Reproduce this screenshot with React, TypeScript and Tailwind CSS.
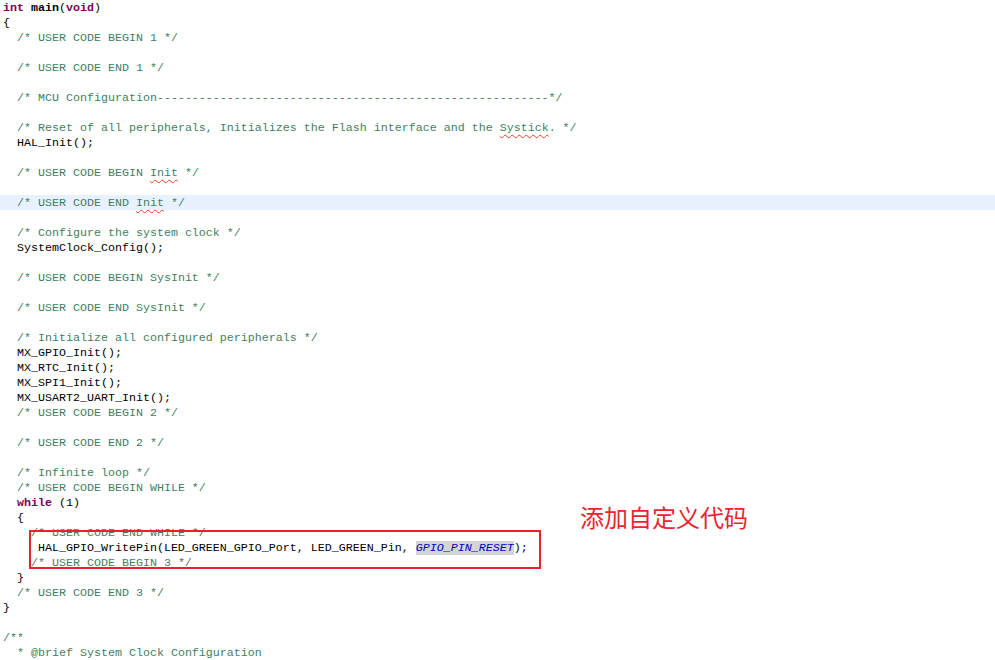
import React from 'react';

type Seg = { t: string; c?: 'kw' | 'cm' | 'bold' | 'const' | 'squig' | 'cmsquig' };
type Line = { segs: Seg[]; hl?: boolean };

const cm = (t: string): Seg => ({ t, c: 'cm' });
const tx = (t: string): Seg => ({ t });

const lines: Line[] = [
  { segs: [{ t: 'int', c: 'kw' }, tx(' '), { t: 'main', c: 'bold' }, tx('('), { t: 'void', c: 'kw' }, tx(')')] },
  { segs: [tx('{')] },
  { segs: [tx('  '), cm('/* USER CODE BEGIN 1 */')] },
  { segs: [] },
  { segs: [tx('  '), cm('/* USER CODE END 1 */')] },
  { segs: [] },
  { segs: [tx('  '), cm('/* MCU Configuration--------------------------------------------------------*/')] },
  { segs: [] },
  {
    segs: [
      tx('  '),
      cm('/* Reset of all peripherals, Initializes the Flash interface and the '),
      { t: 'Systick', c: 'cmsquig' },
      cm('. */'),
    ],
  },
  { segs: [tx('  HAL_Init();')] },
  { segs: [] },
  { segs: [tx('  '), cm('/* USER CODE BEGIN '), { t: 'Init', c: 'cmsquig' }, cm(' */')] },
  { segs: [] },
  { segs: [tx('  '), cm('/* USER CODE END '), { t: 'Init', c: 'cmsquig' }, cm(' */')], hl: true },
  { segs: [] },
  { segs: [tx('  '), cm('/* Configure the system clock */')] },
  { segs: [tx('  SystemClock_Config();')] },
  { segs: [] },
  { segs: [tx('  '), cm('/* USER CODE BEGIN SysInit */')] },
  { segs: [] },
  { segs: [tx('  '), cm('/* USER CODE END SysInit */')] },
  { segs: [] },
  { segs: [tx('  '), cm('/* Initialize all configured peripherals */')] },
  { segs: [tx('  MX_GPIO_Init();')] },
  { segs: [tx('  MX_RTC_Init();')] },
  { segs: [tx('  MX_SPI1_Init();')] },
  { segs: [tx('  MX_USART2_UART_Init();')] },
  { segs: [tx('  '), cm('/* USER CODE BEGIN 2 */')] },
  { segs: [] },
  { segs: [tx('  '), cm('/* USER CODE END 2 */')] },
  { segs: [] },
  { segs: [tx('  '), cm('/* Infinite loop */')] },
  { segs: [tx('  '), cm('/* USER CODE BEGIN WHILE */')] },
  { segs: [tx('  '), { t: 'while', c: 'kw' }, tx(' (1)')] },
  { segs: [tx('  {')] },
  { segs: [tx('    '), cm('/* USER CODE END WHILE */')] },
  {
    segs: [
      tx('     HAL_GPIO_WritePin(LED_GREEN_GPIO_Port, LED_GREEN_Pin, '),
      { t: 'GPIO_PIN_RESET', c: 'const' },
      tx(');'),
    ],
  },
  { segs: [tx('    '), cm('/* USER CODE BEGIN 3 */')] },
  { segs: [tx('  }')] },
  { segs: [tx('  '), cm('/* USER CODE END 3 */')] },
  { segs: [tx('}')] },
  { segs: [] },
  { segs: [cm('/**')] },
  { segs: [tx('  '), cm('* @brief System Clock Configuration')] },
];

const segClass = (c?: Seg['c']) => {
  switch (c) {
    case 'kw':
      return 'text-[#7f0055] font-bold';
    case 'bold':
      return 'text-black font-bold';
    case 'cm':
      return 'text-[#3f7f5f]';
    case 'cmsquig':
      return 'text-[#3f7f5f] underline decoration-wavy decoration-[#e8412a] decoration-1 underline-offset-[3px]';
    case 'const':
      return 'text-[#0000c0] italic bg-[#d4d4d4]';
    default:
      return 'text-black';
  }
};

export default function App() {
  return (
    <div className="relative w-[995px] h-[660px] overflow-hidden bg-white">
      <div className="font-['Liberation_Mono',monospace] text-[11.66px]">
        {lines.map((line, i) => (
          <div
            key={i}
            className={`h-[15px] pt-[2px] pl-[3px] leading-[13px] whitespace-pre ${line.hl ? 'bg-[#e8f2fe]' : ''}`}
          >
            {line.segs.map((s, j) => (
              <span key={j} className={segClass(s.c)}>
                {s.t}
              </span>
            ))}
          </div>
        ))}
      </div>

      {/* annotation */}
      <div className="absolute left-[29px] top-[530px] w-[512px] h-[39px] border-2 border-[#e8212a]" />
      <div className="absolute left-[580px] top-[503px] text-[24px] leading-[28px] text-[#e8262f] font-['Noto_Sans_CJK_SC',sans-serif]">
        添加自定义代码
      </div>
    </div>
  );
}
